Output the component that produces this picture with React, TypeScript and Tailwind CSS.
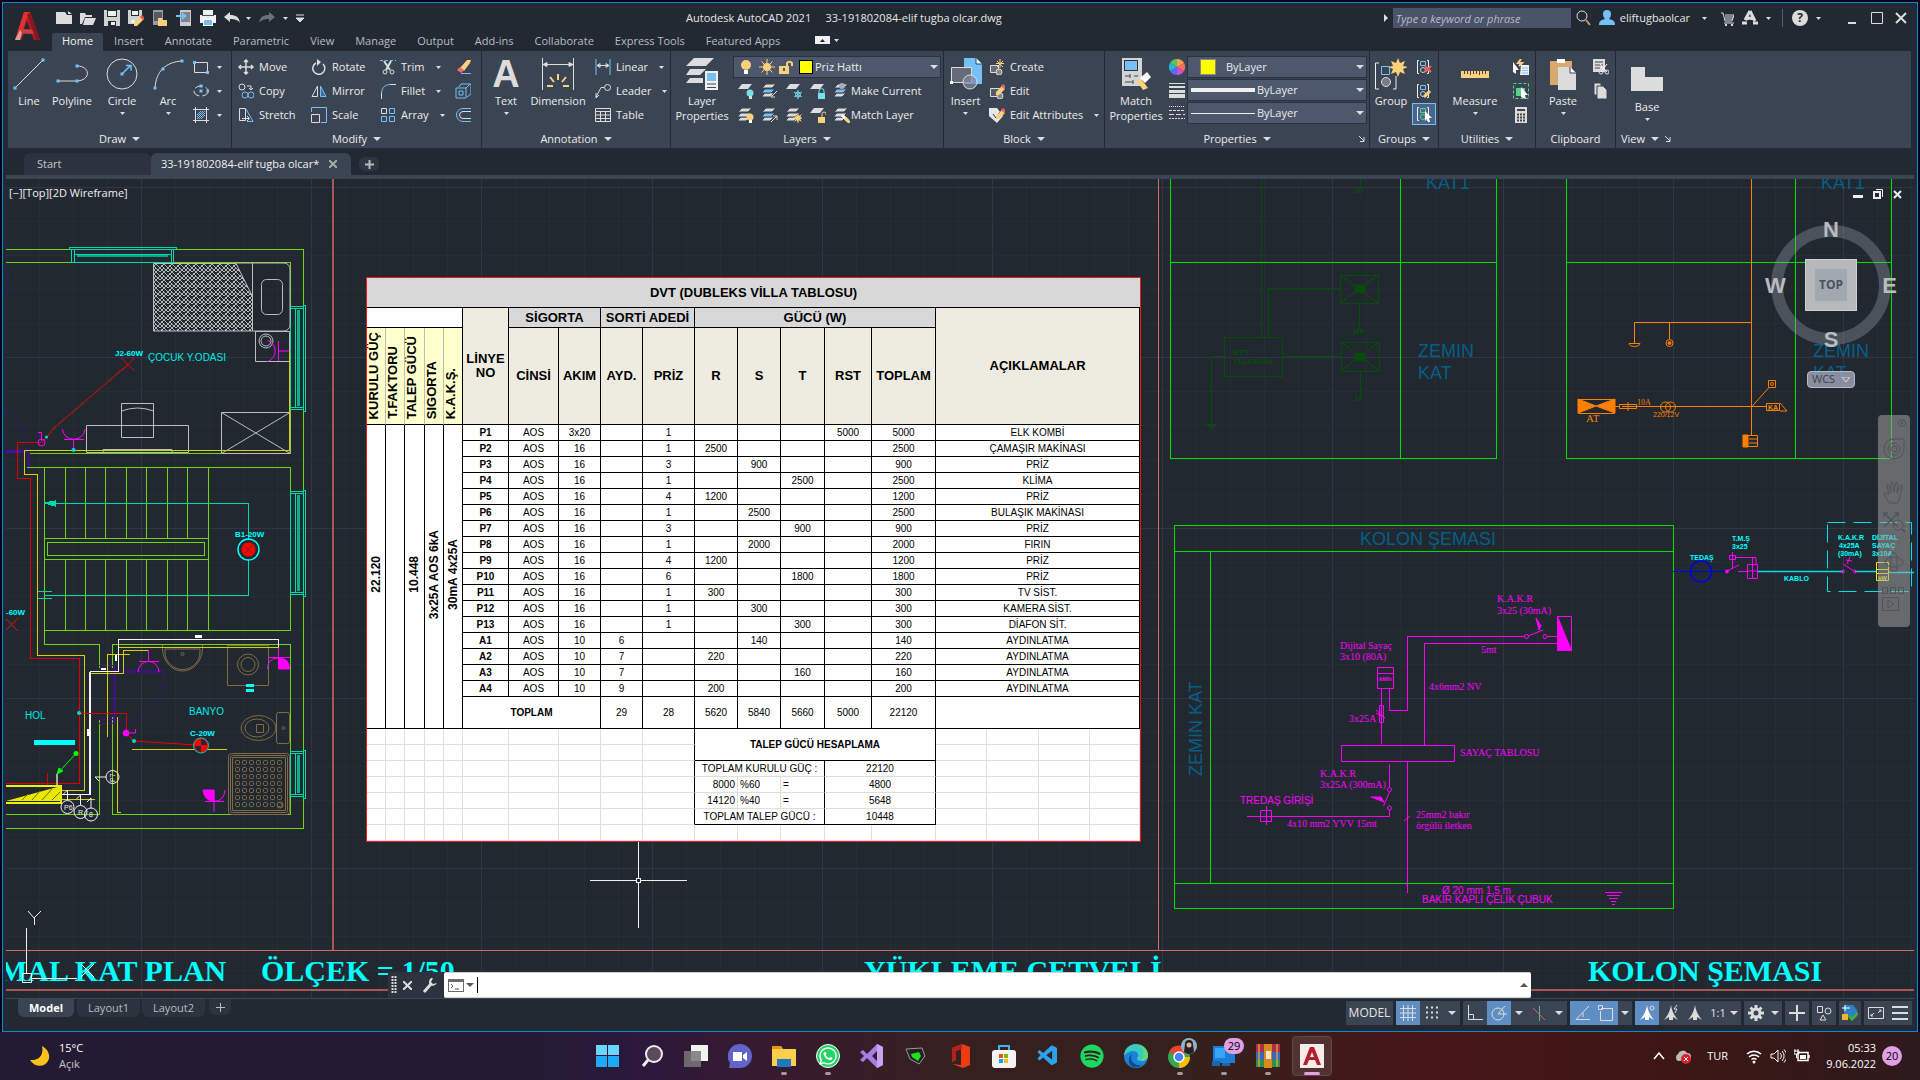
import React from "react";
import { FaSpotify, FaWhatsapp } from "react-icons/fa6";
import { VscVscode } from "react-icons/vsc";

type Kids = { children?: React.ReactNode };

/* ---------- shared pieces ---------- */

function Ico({ s = 16, w, h, vb, children }: Kids & { s?: number; w?: number; h?: number; vb?: string }) {
  return (
    <svg
      width={w ?? s}
      height={h ?? s}
      viewBox={vb ?? `0 0 ${w ?? s} ${h ?? s}`}
      fill="none"
      stroke="#dcdcdc"
      className="block shrink-0"
      aria-hidden="true"
    >
      {children}
    </svg>
  );
}

function Caret({ small }: { small?: boolean }) {
  return small ? (
    <Ico w={5} h={3}><path d="M0 0h5L2.500 3z" fill="#dcdcdc" stroke="none" /></Ico>
  ) : (
    <Ico w={8} h={4}><path d="M0 0h8L4 4z" fill="#dcdcdc" stroke="none" /></Ico>
  );
}

const B = "#74c0f7";
const Y = "#fbd07a";

/* ---------- title bar ---------- */

function Logo() {
  return (
    <svg width="25" height="29" viewBox="0 0 25 29" aria-hidden="true">
      <path d="M9 0h6l10 28h-6l-2-6H9l-3 6H0z" fill="#b3202a" />
      <path d="M9 0h6l3 9-4-1-2-3-4 12-3 11H0z" fill="#e0322f" />
      <path d="M12 9l3 8H9z" fill="#222933" />
      <path d="M5 17l14 1 1 4-13-1z" fill="#c8423f" />
      <path d="M15 0l10 28h-4L12 3z" fill="#8b1620" />
      <path d="M2 24l3-6 2 3-2 7H0z" fill="#d9a09c" />
    </svg>
  );
}

const quick: [string, React.ReactNode][] = [
  ["New", <path key="n" d="M0 2h9l2 3h5v9H0zM12 1l4 3h-4z" fill="#dcdcdc" stroke="none" />],
  ["Open", <path key="o" d="M0 3h5l1 2h6v2H5L2 14H0zM5 8h11l-3 7H3z" fill="#dcdcdc" stroke="none" />],
  ["Save", <g key="s" stroke="none"><path d="M0 0h16v16H0z" fill="#cfd3cf" /><path d="M3 0h10v7H3zM4 11h8v5H4z" fill="#222933" /><path d="M4 1h8v5H4zM7 12h4v3H7z" fill="#eee" /></g>],
  ["Save As", <g key="a" stroke="none"><path d="M0 0h14v9l-6 5H0z" fill="#cfd3cf" /><path d="M3 0h8v6H3z" fill="#222933" /><path d="M4 1h6v4H4zM3 10h4v3H3z" fill="#eee" /><path d="M6 13l7-7 3 3-7 7H6z" fill={Y} /><path d="M12 7l2-2 3 3-2 2z" fill="#e25050" /></g>],
  ["Open from Web", <g key="w" stroke="none"><path d="M1 0h10v15H1z" fill="#9a9da0" /><path d="M2 2h8v9H2z" fill="#555b63" /><path d="M6 8h4l1 2h4v6H6z" fill={Y} /></g>],
  ["Save to Web", <g key="b" stroke="none"><path d="M4 0h11v16H4z" fill="#c9cccf" /><path d="M5 2h9v10H5z" fill="#7d838a" /><path d="M0 5h6V2l5 4-5 4V7H0z" fill={B} /></g>],
  ["Plot", <g key="p" stroke="none"><path d="M3 0h10v5H3zM0 5h16v8H0z" fill="#f0f0f0" /><path d="M3 9h10v7H3z" fill="#fff" /><path d="M4 10h8v5H4z" fill={B} /><path d="M2 5h12v1H2z" fill="#555" /></g>],
  ["Undo", <path key="u" d="M0 7l6-5v3c6 0 9 2 10 8-2-3-5-4-10-4v3z" fill="#dcdcdc" stroke="none" />],
];

const menu = ["Home", "Insert", "Annotate", "Parametric", "View", "Manage", "Output", "Add-ins", "Collaborate", "Express Tools", "Featured Apps"];

function Header() {
  return (
    <header className="flex h-12 text-[#e6e6e6]">
      <div className="flex w-[49px] items-end justify-center pb-[10px]">
        <button aria-label="Application menu"><Logo /></button>
      </div>
      <div className="flex min-w-0 flex-1 flex-col">
        <div className="flex h-[30px] items-center">
          <div className="flex items-center pl-1">
            <div className="flex items-center gap-2">
              {quick.map(([n, i]) => (
                <button key={n} aria-label={n}><Ico>{i}</Ico></button>
              ))}
            </div>
            <span className="ml-[6px]"><Caret small /></span>
            <button aria-label="Redo" className="ml-2">
              <Ico><path d="M16 7l-6-5v3C4 5 1 7 0 13c2-3 5-4 10-4v3z" fill="#6b7077" stroke="none" /></Ico>
            </button>
            <span className="ml-2"><Caret small /></span>
            <button aria-label="Customize" className="ml-2"><Ico w={8} h={8}><path d="M0 1h8M0 4h8L4 8z" fill="#dcdcdc" /></Ico></button>
          </div>
          <h1 className="flex-1 whitespace-pre text-center text-[11px]">{"Autodesk AutoCAD 2021     33-191802084-elif tugba olcar.dwg"}</h1>
          <div className="flex items-center pr-[10px]">
            <Ico w={4} h={8}><path d="M0 0v8l4-4z" fill="#dcdcdc" stroke="none" /></Ico>
            <input
              aria-label="Search"
              placeholder="Type a keyword or phrase"
              className="ml-[5px] h-5 w-[178px] bg-[#4a5367] px-[3px] text-[11px] italic placeholder:text-[#b8bcc6]"
            />
            <button aria-label="Search" className="ml-1"><Ico><circle cx="7" cy="6" r="5" /><path d="M11 10l4 5" stroke="#c79a6a" strokeWidth="2" /></Ico></button>
            <button className="ml-2 flex items-center gap-[5px]">
              <Ico><path d="M8 0a4 4 0 014 4c0 2-1 4-2 5 4 1 6 2 6 6H0c0-4 2-5 6-6-1-1-2-3-2-5a4 4 0 014-4z" fill={B} stroke="none" /></Ico>
              <span>eliftugbaolcar</span>
            </button>
            <span className="ml-3"><Caret small /></span>
            <button aria-label="App Store" className="ml-[14px]"><Ico w={13} h={15}><path d="M0 2h2l2 8h7l2-6M4 4h9M4 6h8M4 8h8M3 12h10" /><path d="M4 13h2v2H4zM10 13h2v2h-2z" fill="#dcdcdc" stroke="none" /></Ico></button>
            <button aria-label="Autodesk" className="ml-2"><Ico><path d="M8 1l5 10M8 1L3 10M4 9l4-1 4 1M0 13h5M11 13h5" strokeWidth="3" /></Ico></button>
            <span className="ml-2"><Caret small /></span>
            <span className="ml-[11px] h-[18px] w-px bg-[#46607c]" />
            <button aria-label="Help" className="ml-[9px] grid size-4 place-items-center rounded-full bg-[#dcdcdc] text-[12px] font-bold leading-4 text-[#222933]">?</button>
            <span className="ml-2"><Caret small /></span>
            <button aria-label="Minimize" className="ml-[27px]"><Ico w={8} h={14}><path d="M0 12h8" strokeWidth="2" /></Ico></button>
            <button aria-label="Maximize" className="ml-[15px]"><Ico w={12} h={12}><path d="M.5.5h11v11H.5z" strokeWidth="1" /></Ico></button>
            <button aria-label="Close" className="ml-3"><Ico w={12} h={12}><path d="M1 1l10 10M11 1L1 11" strokeWidth="2" /></Ico></button>
          </div>
        </div>
        <nav className="flex h-[18px] gap-px text-[#b9bcc2]">
          {menu.map((m, i) => (
            <a key={m} href={"#" + m} className={i === 0 ? "rounded-t-xs bg-[#3b4453] px-[10px] leading-4 text-[#f0f0f0]" : "px-[10px] leading-4"}>{m}</a>
          ))}
          <button aria-label="Ribbon display" className="ml-6 flex items-center gap-1 pb-1">
            <Ico w={15} h={8}><path d="M0 0h15v8H0z" fill="#f0f0f0" stroke="none" /><path d="M5 6l2.500-3L10 6z" fill="#222" stroke="none" /></Ico>
            <Caret small />
          </button>
        </nav>
      </div>
    </header>
  );
}

/* ---------- ribbon ---------- */

function Big({ label, icon, caret, className }: { label: string; icon: React.ReactNode; caret?: boolean; className: string }) {
  return (
    <button className={"flex flex-col items-center self-start pt-[7px] " + className}>
      <span className="grid h-8 place-items-center">{icon}</span>
      <span className="mt-[3px] whitespace-pre-line text-center leading-[15px]">{label}</span>
      {caret && <span className="mt-1"><Caret small /></span>}
    </button>
  );
}

function Row({ label, icon, caret }: { label: string; icon: React.ReactNode; caret?: boolean }) {
  return (
    <button className="flex h-6 items-center gap-[5px] whitespace-nowrap">
      <Ico>{icon}</Ico>
      <span>{label}</span>
      {caret && <span className="ml-[6px]"><Caret small /></span>}
    </button>
  );
}

function Panel({ title, caret = true, launcher, left, className, children }: Kids & { title: string; caret?: boolean; launcher?: boolean; left?: boolean; className: string }) {
  return (
    <section aria-label={title} className={"flex h-[97px] shrink-0 flex-col border-r border-[#222933] bg-[#3b4453] " + className}>
      <div className="flex flex-1">{children}</div>
      <div className={"relative flex h-[18px] items-center gap-[6px] leading-[18px] " + (left ? "pl-[5px]" : "justify-center")}>
        <span>{title}</span>
        {caret && <Caret />}
        {launcher && (
          <span className={left ? "" : "absolute right-1"}>
            <Ico w={6} h={6}><path d="M0 0l5 5M5 1v4.500H1" /></Ico>
          </span>
        )}
      </div>
    </section>
  );
}

function Dot({ x, y }: { x: number; y: number }) {
  return <rect x={x - 1.5} y={y - 1.5} width="3" height="3" fill={B} stroke="none" />;
}

function Sheets({ top, extra }: { top?: string; extra?: React.ReactNode }) {
  return (
    <g>
      <path d="M1 12l2-2h9l-4 4H0z" fill="#dcdcdc" stroke="#3b4453" />
      <path d="M1 8l2-2h10l-4 4H0z" fill={top ?? "#dcdcdc"} stroke="#3b4453" />
      <path d="M4 1h10l-4 4H0z" fill="#dcdcdc" stroke="#3b4453" />
      {extra}
    </g>
  );
}
const bulb = (c: string) => <g stroke="none"><circle cx="12" cy="10" r="3.500" fill={c} /><path d="M11 13h3v3h-3z" fill={c === Y ? "#fff" : "#dcdcdc"} /></g>;
const sun = <g stroke={Y}><circle cx="12" cy="11" r="2.500" fill={Y} /><path d="M12 6v10M7 11h10M8.500 7.500l7 7M15.500 7.500l-7 7" /></g>;
const lock = (c: string, open?: boolean) => <g><path d={open ? "M12 10V7a2 2 0 014 0v1" : "M9 10V8a2 2 0 015 0v2"} stroke={c} /><path d="M8 10h7v6H8z" fill={c} stroke="none" /></g>;
const single = <path d="M4 1h10l-4 5H0z" fill="#dcdcdc" stroke="none" />;
const pencil = <g stroke="none"><path d="M7 9l6-6 3 3-6 6H7z" fill={Y} /><path d="M12 3l2-2 3 3-2 2z" fill="#f06060" /></g>;

function Combo({ label, text, pad, children }: Kids & { label: string; text: string; pad: string }) {
  return (
    <div className="relative h-[22px] w-full border border-[#2a3140] bg-[#4d586c]">
      <div className="pointer-events-none absolute inset-0 flex items-center">{children}</div>
      <select aria-label={label} className={"size-full appearance-none bg-transparent text-[11px] leading-5 " + pad}>
        <option>{text}</option>
      </select>
      <span className="pointer-events-none absolute right-[2px] top-2"><Caret /></span>
    </div>
  );
}

function Ribbon() {
  return (
    <div className="mx-[5px] flex bg-[#3b4453] text-[#ececec]">
      <Panel title="Draw" className="w-[224px]">
        <Big className="w-[42px]" label="Line" icon={<Ico s={32}><path d="M2 30L30 2" /><Dot x={2} y={30} /><Dot x={30} y={2} /></Ico>} />
        <Big className="w-11" label="Polyline" icon={<Ico s={32}><path d="M2 23h18c15 0 15-15 1-15" /><Dot x={2} y={23} /><Dot x={21} y={23} /><Dot x={21} y={8} /></Ico>} />
        <Big className="w-14" label="Circle" caret icon={<Ico s={32}><circle cx="16" cy="16" r="15" /><path d="M16 16l8-8M20 7.500h5v5" stroke={B} strokeWidth="1.500" /><Dot x={16} y={16} /></Ico>} />
        <Big className="w-9" label="Arc" caret icon={<Ico s={32}><path d="M3 30C4 13 14 4 30 3" /><Dot x={3} y={30} /><Dot x={11} y={11} /><Dot x={30} y={3} /></Ico>} />
        <div className="flex flex-col pl-[7px] pt-1">
          {[
            ["Rectangle", <g key="r"><path d="M1.500 3.500h13v10h-13z" /><Dot x={1.500} y={3.500} /><Dot x={14.500} y={13.500} /></g>],
            ["Ellipse", <g key="e"><ellipse cx="8" cy="8" rx="7" ry="5" strokeDasharray="8 3" /><Dot x={8} y={8} /><Dot x={8} y={3} /><Dot x={15} y={8} /></g>],
            ["Hatch", <g key="h"><path d="M2.500 0v16M13.500 0v16M0 2.500h16M0 13.500h16" /><path d="M4 8l4-4M4 12l8-8M8 12l4-4M4 10l6-6M6 12l6-6" stroke={B} /></g>],
          ].map(([n, i]) => (
            <button key={n as string} aria-label={n as string} className="flex h-6 items-center gap-2"><Ico>{i}</Ico><Caret small /></button>
          ))}
        </div>
      </Panel>

      <Panel title="Modify" className="w-[250px]">
        <div className="grid flex-1 grid-cols-[73px_69px_75px_1fr] content-start pl-[6px] pt-1">
          <Row label="Move" icon={<path d="M8 1v14M1 8h14M6 3l2-2 2 2M6 13l2 2 2-2M3 6L1 8l2 2M13 6l2 2-2 2" strokeWidth="1.500" />} />
          <Row label="Rotate" icon={<g><path d="M5 4a6 6 0 107 1" strokeWidth="1.500" /><path d="M6 0l4 3-4 4z" fill="#dcdcdc" stroke="none" /></g>} />
          <Row label="Trim" caret icon={<g><path d="M0 1.500h16" stroke={B} strokeDasharray="3 2" /><path d="M4 2l6 9M11 2L6 11" strokeWidth="2" /><circle cx="5" cy="13" r="2" /><circle cx="12" cy="13" r="2" /></g>} />
          <Row label="" icon={<g stroke="none"><path d="M5 9l7-8h4l-1 3-6 8z" fill={Y} /><path d="M2 11l3-3 4 3-3 3z" fill="#f06a6a" /><path d="M6 14h10v1H6z" fill={B} /></g>} />
          <Row label="Copy" icon={<g><circle cx="4" cy="4" r="3" /><path d="M9 3h4v4M11 5l2 2 2-2" /><circle cx="7" cy="12" r="3" stroke={B} /><circle cx="13" cy="12" r="3" stroke={B} /></g>} />
          <Row label="Mirror" icon={<g><path d="M6.500 3v10.500H1z" /><path d="M9.500 3v10.500H15z" stroke={B} fill="#3f6e9a" /></g>} />
          <Row label="Fillet" caret icon={<g><path d="M1.500 16v-6" /><path d="M1.500 10C2 4 5 2 10 1.500" stroke={B} /><path d="M10 1.500h6" /></g>} />
          <Row label="" icon={<path d="M1 5h10v10H1zM4 4l2-3h10v10l-4 3M11 5l4-4M4 8h4v4H4z" stroke={B} />} />
          <Row label="Stretch" icon={<g><path d="M1.500 1.500h6v12h-6zM4 11.500h7M9 9l2.500 2.500L9 14" /><path d="M8 2l7 12.500H9" stroke={B} /></g>} />
          <Row label="Scale" icon={<g><path d="M.5 7.500h8v8h-8z" /><path d="M.5 5V.5h15v15H10" stroke={B} /></g>} />
          <Row label="Array" caret icon={<g><path d="M1.500 1.500h5v5h-5z" /><path d="M9.500 1.500h5v5h-5zM1.500 9.500h5v5h-5zM9.500 9.500h5v5h-5z" stroke={B} /></g>} />
          <Row label="" icon={<g><path d="M16 1.500H8a6.500 6.500 0 000 13h8" stroke={B} /><path d="M16 4.500H8a3.500 3.500 0 000 7h8" /></g>} />
        </div>
      </Panel>

      <Panel title="Annotation" className="w-[189px]">
        <Big className="w-12" label="Text" caret icon={<span className="font-['Liberation_Sans',sans-serif] text-[38px] font-bold leading-8 text-[#dcdcdc]">A</span>} />
        <Big className="w-14" label="Dimension" icon={<Ico s={32}><path d="M.5 0v32M31.500 0v32M1 6.500h30M1 6.500l4-2v4zM31 6.500l-4-2v4z" fill="#dcdcdc" /><path d="M16 16v6M8 19l4 5M24 19l-4 5M5 28h6M21 28h6" stroke={Y} strokeWidth="2" /></Ico>} />
        <div className="flex flex-col items-start pl-[9px] pt-1">
          <Row label="Linear" caret icon={<g><path d="M1 0v16M15 0v16" stroke={B} /><path d="M2 6.500h12M2 6.500l3-2v4zM14 6.500l-3-2v4z" /></g>} />
          <Row label="Leader" caret icon={<g><circle cx="12.500" cy="4.500" r="3" /><path d="M9 4.500H6L1 14M1 10v5l3-3" /></g>} />
          <Row label="Table" icon={<path d="M.5 1.500h15v13H.5zM.5 4.500h15M.5 8h15M.5 11.500h15M5.500 4v10M10.500 4v10" />} />
        </div>
      </Panel>

      <Panel title="Layers" className="w-[273px]">
        <Big className="w-[62px]" label={"Layer\nProperties"} icon={
          <Ico s={32}><g stroke="none"><path d="M8 0h20l-8 8H0zM4 11h16l-6 6H0zM4 20h13v5H0z" fill="#dcdcdc" /><path d="M19 13h13v19H19z" fill="#f0f0f0" /><path d="M21 15h9v8h-9z" fill={B} /></g><path d="M21 26h9M21 29.500h9" stroke="#444" /></Ico>} />
        <div className="flex flex-1 flex-col pr-[2px] pt-[5px]">
          <Combo label="Layer" text="Priz Hattı" pad="pl-[81px]">
            <div className="flex items-center gap-1 pl-[5px]">
              <Ico><circle cx="7" cy="6" r="5" fill={Y} stroke="none" /><path d="M5 11h4v4H5z" fill="#fff" stroke="none" /></Ico>
              <Ico><circle cx="8" cy="8" r="4" fill={Y} stroke="none" /><path d="M8 0v16M0 8h16M2.500 2.500l11 11M13.500 2.500l-11 11" stroke={Y} /></Ico>
              <Ico><path d="M0 7h10v8H0z" fill={Y} stroke="none" /><path d="M8 8V4a3 3 0 015 0v3" stroke={Y} strokeWidth="2" /><path d="M4 9h2v3H4z" fill="#4d586c" stroke="none" /></Ico>
              <span className="size-[14px] border border-black bg-[#ffff00]" />
            </div>
          </Combo>
          {[0, 1].map((r) => (
            <div key={r} className="flex h-6 items-center gap-2 pl-[5px] pt-[2px]">
              {(r === 0
                ? [
                    <g key="1">{single}{bulb("#74e0ec")}</g>,
                    <Sheets key="2" top={B} extra={<path d="M15 8l-5 5M9 10v4h4" />} />,
                    <g key="3">{single}<path d="M12 7v9M8 9l8 5M16 9l-8 5" stroke="#74e0ec" /><circle cx="12" cy="11.500" r="2.500" stroke="#74e0ec" /></g>,
                    <g key="4">{single}{lock("#74e0ec")}</g>,
                    <g key="5"><Sheets top={B} /><circle cx="8" cy="3" r="3" fill="#aab" stroke="none" /></g>,
                  ]
                : [
                    <Sheets key="1" extra={bulb(Y)} />,
                    <Sheets key="2" top={B} extra={<path d="M9 15l6-6M11 9h4v4" />} />,
                    <Sheets key="3" extra={sun} />,
                    <g key="4">{single}{lock(Y, true)}</g>,
                    <Sheets key="5" extra={<g><path d="M8 8l6 6" stroke="#fff" strokeWidth="3" /><path d="M11 11l5 5" stroke={Y} strokeWidth="3" /></g>} />,
                  ]
              ).map((ic, i) => (
                <button key={i} aria-label={"Layer tool " + (r * 5 + i + 1)}><Ico>{ic}</Ico></button>
              ))}
              <button className="-ml-2 whitespace-nowrap pl-px">{r === 0 ? "Make Current" : "Match Layer"}</button>
            </div>
          ))}
        </div>
      </Panel>

      <Panel title="Block" className="w-[161px]">
        <Big className="w-[43px]" label="Insert" caret icon={
          <Ico s={32}><path d="M14 0h12l6 6v20H14z" fill={B} stroke="none" /><path d="M26 0v6h6" fill="#dff" stroke="#3b4453" /><path d="M1.500 9.500h20v15h-20z" fill="#666c78" /><circle cx="20" cy="24" r="7" fill="#8088a0" fillOpacity=".7" /><rect x="0" y="23" width="3" height="3" fill="#fff" stroke="none" /></Ico>} />
        <div className="flex flex-col items-start pl-[2px] pt-1">
          <Row label="Create" icon={<g><path d="M1.500 6.500h8v7h-8z" fill="#666c78" /><circle cx="10" cy="13" r="3" fill="#888" /><path d="M11 0v9M7 4.500h8M8 2l6 6M14 2L8 8" stroke={Y} /></g>} />
          <Row label="Edit" icon={<g><path d="M1.500 5.500h9v8h-9z" fill="#555b66" /><circle cx="11" cy="13" r="3" fill="#888" />{pencil}</g>} />
          <Row label="Edit Attributes" caret icon={<g><path d="M0 1h8l6 8-6 7-8-7z" fill="#e6e6e6" stroke="none" /><path d="M4 7l3 4 4-6" stroke="#333" />{pencil}</g>} />
        </div>
      </Panel>

      <Panel title="Properties" launcher className="w-[265px]">
        <Big className="w-[62px]" label={"Match\nProperties"} icon={
          <Ico s={32}><g stroke="none"><path d="M2 0h20v28H2z" fill="#d4d4d4" /><path d="M4 2h14v11H4z" fill="#333" /><path d="M5 3h12v9H5z" fill={B} /><path d="M20 20l7-6 4 5-6 6z" fill="#fff" /><path d="M16 22l6 0 6 8-5 2z" fill={Y} /></g><path d="M5 18h5M14 18h4M5 24h8M10 16v4M13 22v4" stroke="#444" /></Ico>} />
        <div className="flex flex-1 flex-col gap-px pl-[2px] pr-[2px] pt-[5px]">
          <div className="flex items-center gap-[2px]">
            <Ico><g stroke="none"><path d="M8 8V0a8 8 0 017 4z" fill="#ff9f43" /><path d="M8 8l7-4a8 8 0 010 8z" fill="#ff6b57" /><path d="M8 8l7 4a8 8 0 01-7 4z" fill="#d14fd1" /><path d="M8 8v8a8 8 0 01-7-4z" fill="#5b6bf0" /><path d="M8 8l-7 4a8 8 0 010-8z" fill="#29b6d8" /><path d="M8 8L1 4a8 8 0 017-4z" fill="#59c16b" /></g></Ico>
            <Combo label="Object color" text="ByLayer" pad="pl-[38px]"><span className="ml-3 size-4 border border-[#888] bg-[#ffff00]" /></Combo>
          </div>
          <div className="flex items-center gap-[2px]">
            <Ico><path d="M0 1.500h16" /><path d="M0 5h16" strokeWidth="2" /><path d="M0 9.500h16" strokeWidth="3" /><path d="M0 14h16" strokeWidth="4" /></Ico>
            <Combo label="Lineweight" text="ByLayer" pad="pl-[69px]"><span className="ml-[3px] h-1 w-16 bg-[#f0f0f0]" /></Combo>
          </div>
          <div className="flex items-center gap-[2px]">
            <Ico><path d="M0 1.500h16" strokeDasharray="1 1" /><path d="M0 5.500h16" strokeDasharray="3 1" /><path d="M0 9.500h16" strokeDasharray="5 2" /><path d="M0 13.500h16" strokeDasharray="2 1" /></Ico>
            <Combo label="Linetype" text="ByLayer" pad="pl-[69px]"><span className="ml-[3px] h-px w-16 bg-[#f0f0f0]" /></Combo>
          </div>
        </div>
      </Panel>

      <Panel title="Groups" className="w-[69px]">
        <Big className="w-[42px]" label="Group" icon={
          <Ico s={32}><path d="M4 5H.5v26H4M18 31h3V18" stroke="#eee" /><path d="M6.500 8.500h8v8h-8z" stroke={B} /><circle cx="11" cy="24" r="4.500" fill="#777c86" /><path d="M23 0l2 5 5-2-2 5 5 1-5 2 2 5-5-2-2 5-2-5-5 2 2-5-5-2 5-1-2-5 5 2z" fill={Y} stroke="none" /></Ico>} />
        <div className="flex flex-col pt-1">
          {[
            <path key="a" d="M9 7l6 6M15 7l-6 6" stroke="#f06060" strokeWidth="2" />,
            <path key="b" d="M8 14l6-6" stroke={Y} strokeWidth="3" />,
            <path key="c" d="M9 5l7 7h-3l1 4-2 0-1-3-2 2z" fill="#fff" stroke="none" />,
          ].map((x, i) => (
            <button key={i} aria-label={["Ungroup", "Group Edit", "Group Selection"][i]} className={"grid w-6 place-items-center " + (i === 2 ? "h-[22px] border border-[#74c0f7] bg-[#4a6588]" : "h-6")}>
              <Ico><path d="M3 1.500H1.500v13H3M11 1.500h1.500v13H11" stroke="#eee" /><path d="M4.500 2.500h5v4h-5z" stroke={i === 2 ? "#59d18b" : B} /><circle cx="7" cy="11" r="2.500" stroke={i === 2 ? "#59d18b" : "#ccc"} />{x}</Ico>
            </button>
          ))}
        </div>
      </Panel>

      <Panel title="Utilities" className="w-[97px]">
        <Big className="w-[72px]" label="Measure" caret icon={<Ico w={28} h={7}><path d="M0 0h28v7H0z" fill={Y} stroke="none" /><path d="M3.500 0v3M6.500 0v3M9.500 0v4M12.500 0v3M15.500 0v3M18.500 0v4M21.500 0v3M24.500 0v3" stroke="#3b4453" /></Ico>} />
        <div className="flex flex-col pl-[2px] pt-1 [&>button]:h-6">
          <button aria-label="Quick Select"><Ico><path d="M8 6h8v10H7z" fill="#f0f0f0" stroke="none" /><path d="M9 9h6M9 11.500h6M9 14h6" stroke={B} /><path d="M0 3l6 8H3v4L0 13z" fill="#fff" stroke="none" /><path d="M8 0l-3 4h4L6 7" stroke={Y} strokeWidth="2" /></Ico></button>
          <button aria-label="Select All"><Ico><path d="M.5.5h15v15H.5z" stroke="#59d18b" strokeDasharray="3 2" /><path d="M3 5h9v8H3z" fill="#59d18b" stroke="none" /><path d="M8 4l7 8h-3l1 4-3-1-2-1z" fill="#fff" stroke="none" /></Ico></button>
          <button aria-label="Quick Calculator"><Ico><path d="M2 0h12v16H2z" fill="#dcdcdc" stroke="none" /><path d="M4 3h8M4 7.500h2M7 7.500h2M10 7.500h2M4 10.500h2M7 10.500h2M10 10.500h2M4 13.500h2M7 13.500h2M10 13.500h2" stroke="#444" strokeWidth="2" /></Ico></button>
        </div>
      </Panel>

      <Panel title="Clipboard" caret={false} className="w-20">
        <Big className="w-[54px]" label="Paste" caret icon={<Ico w={28} h={32}><g stroke="none"><path d="M1 3h22v24H1z" fill="#d9a86c" /><path d="M8 1h8v4H8z" fill="#fff" /><path d="M9 9h12l6 6v17H9z" fill="#dcdcdc" /><path d="M21 9v6h6z" fill="#fff" /></g><path d="M21 9v6h6" stroke="#3b4453" /></Ico>} />
        <div className="flex flex-col pl-[3px] pt-1 [&>button]:h-6">
          <button aria-label="Cut"><Ico><path d="M0 0h12v13H0z" fill="#dcdcdc" stroke="none" /><path d="M2 3h8M2 6h8M2 9h5" stroke="#444" /><path d="M7 5l7 8M14 5l-6 8" stroke="#fff" /><circle cx="8" cy="13" r="2" /><circle cx="14" cy="13" r="2" /></Ico></button>
          <button aria-label="Copy Clip"><Ico><path d="M1 0h7v12H1z" fill="#dcdcdc" stroke="#3b4453" /><path d="M4 3h6l4 4v9H4z" fill="#dcdcdc" stroke="#3b4453" /></Ico></button>
        </div>
      </Panel>

      <Panel title="View" launcher left className="min-w-0 flex-1">
        <button className="flex w-[62px] flex-col items-center self-start pt-4">
          <Ico w={32} h={24}><path d="M0 0h14v10h18v14H0z" fill="#dcdcdc" stroke="none" /></Ico>
          <span className="mt-2 leading-[15px]">Base</span>
          <span className="mt-1"><Caret small /></span>
        </button>
      </Panel>
    </div>
  );
}

function DocTabs() {
  return (
    <div>
      <div className="flex h-[27px] items-end pl-[21px]">
        <a href="#start" className="h-[22px] w-[127px] rounded-t-md bg-[#2c333f] pl-[13px] leading-[22px] text-[#c4c7cc]">Start</a>
        <div className="flex h-[22px] w-[200px] items-center rounded-t-md bg-[#3b4453] pl-[10px] text-[#f0f0f0]">
          <a href="#drawing" className="whitespace-nowrap">33-191802084-elif tugba olcar*</a>
          <button aria-label="Close tab" className="ml-[10px]"><Ico w={8} h={8}><path d="M0 0l8 8M8 0L0 8" strokeWidth="2" stroke="#aaa" /></Ico></button>
        </div>
        <button aria-label="New tab" className="mb-1 ml-2 grid h-[14px] w-5 place-items-center rounded-md bg-[#2f3643]"><Ico w={9} h={9}><path d="M4.500 0v9M0 4.500h9" stroke="#bbb" strokeWidth="2" /></Ico></button>
      </div>
      <div className="mx-[3px] h-1 bg-[#3b4453]" />
    </div>
  );
}

/* ---------- CAD drawing (drawn in window coordinates) ---------- */

function Txt({ x, y, s = 10, f = "#ff00ff", b, serif, v, children }: Kids & { x: number; y: number; s?: number; f?: string; b?: boolean; serif?: boolean; v?: boolean }) {
  return (
    <text
      x={x}
      y={y}
      fontSize={s}
      fill={f}
      stroke="none"
      fontWeight={b ? 700 : 400}
      fontFamily={serif ? "'Liberation Serif', serif" : "'Liberation Sans', sans-serif"}
      transform={v ? `rotate(-90 ${x} ${y})` : undefined}
    >
      {children}
    </text>
  );
}

function Grid() {
  const xs = Array.from({ length: 58 }, (_, i) => i - 4);
  const ys = Array.from({ length: 26 }, (_, i) => i);
  return (
    <g shapeRendering="crispEdges">
      {xs.map((i) => <path key={i} d={`M${Math.round(141 + i * 34.04)}.500 179v1400`} stroke={i % 5 === 0 ? "#2f3645" : "#262d37"} />)}
      {ys.map((i) => <path key={i} d={`M0 ${Math.round(187 + i * 34.06)}.500h4000`} stroke={i % 5 === 0 ? "#2f3645" : "#262d37"} />)}
    </g>
  );
}

function FloorPlan() {
  const stairs = [65, 85, 105, 126, 146, 167, 187];
  return (
    <g fill="none">
      <g shapeRendering="crispEdges">
        <path stroke="#6fd60c" d={"M6 249.500H303.500V828.500H6M6 262.500H290V453.500H30M27 467.500H290V630.500H44.500M44.500 467V644.500H99.500V668M99.500 720V814.500H6M112.500 668V644.500H290V814.500H112.500V717M44 538.500H208.500V559.500H44M47.500 542.500H204.500V555.500H47.500zM208.500 467V538M208.500 560V630" + stairs.map((x) => `M${x}.500 467V538M${x}.500 560V630`).join("")} />
        <g stroke="#00dca8">
          <path d="M69 247.500h107v2H69zM71.500 249v13h102v-13M74.500 249v13M171.500 249v13M74 254.500h98" />
          <path d="M77 255h91" strokeWidth="3" strokeOpacity=".7" />
          {[[305, 411], [490, 596], [750, 798]].map(([a, b]) => (
            <g key={a}>
              <path d={`M303.500 ${a}h2V${b}h-2zM290 ${a + 1.5}h14M290 ${a + 3.5}h14M290 ${b - 3.5}h14M290 ${b - 1.5}h14M290.500 ${a + 2}V${b - 2}M295.500 ${a + 4}V${b - 4}`} />
              <path d={`M298 ${a + 5}V${b - 5}`} strokeWidth="3" strokeOpacity=".75" />
            </g>
          ))}
          <path d="M44 503.500H248.500V540M248.500 560V595.500H44M37 591.500h15M37 598.500h15" />
          <path d="M44 503l11-2v5z" fill="#00dca8" />
        </g>
      </g>
      {/* bed, desk and wardrobe */}
      <g stroke="#bdbdbd">
        <path d="M153.500 263.500H236l16.500 33v34.500h-99z" fill="url(#weave)" />
        <path d="M236 263h48a6 6 0 016 6v56a6 6 0 01-6 6h-31.500V263" />
        <rect x="261.500" y="279.500" width="21" height="35" rx="5" />
        <path d="M255.500 331.500h34v30h-34zM86.500 425.500h102v27h-102zM121.500 403.500h32v34h-32zM121.500 411q16-6 32 0M221.500 412.500h68.500v41h-68.500zM221.500 412.500l68.500 41M290 412.500l-68.500 41" />
        <path d="M103 449.500h69v3h-69z" />
        <circle cx="266" cy="341" r="7" /><circle cx="266" cy="341" r="5" />
      </g>
      {/* bathroom fittings */}
      <g stroke="#806b45">
        <path d="M162.500 645v3a20 23 0 0040 0v-3M165 649h35v3a17 17 0 01-35 0z" />
        <circle cx="182.500" cy="654" r="1.500" />
        <path d="M227.500 645.500h41v40h-41z" /><circle cx="248" cy="664.500" r="10.500" /><circle cx="248" cy="664.500" r="7" />
        <ellipse cx="258.500" cy="728" rx="17.500" ry="12.500" /><ellipse cx="257" cy="728" rx="12" ry="9" />
        <path d="M256.500 724.500h7v8h-7z" /><rect x="276.500" y="712.500" width="13" height="31" rx="2" /><circle cx="283.500" cy="728" r="1.500" />
        <rect x="228.500" y="753.500" width="61" height="61" rx="3" /><path d="M232.500 757.500h53v53h-53z" /><rect x="230.500" y="755.500" width="57" height="57" rx="2" />
        {Array.from({ length: 49 }, (_, i) => (
          <rect key={i} x={235.500 + (i % 7) * 7} y={760.500 + Math.floor(i / 7) * 7} width="4" height="4" rx="1" />
        ))}
        <circle cx="280" cy="805" r="3" />
      </g>
      {/* doors */}
      <g stroke="#4b0aa0">
        <path d="M6 409q19 14 21 43" strokeDasharray="2 1" /><path d="M6 451.500h21" strokeWidth="3" /><path d="M28.500 452v15" strokeWidth="2" />
        <path d="M8 271q1 12-2 23" strokeDasharray="3 2" />
        <path d="M114.500 666v58" strokeWidth="2" /><path d="M99 665.500h16M99 719.500h16M99 723.500h16" />
        <path d="M119 671.500h45" strokeWidth="4" strokeDasharray="1 1" /><path d="M164.500 674q-1 44-44 48" strokeDasharray="2 2" />
        <path d="M6 773q8 10 8 28" strokeDasharray="2 2" />
      </g>
      <g shapeRendering="crispEdges">
        <path stroke="#d8d000" d="M289 351V450.500H24.500V474.500H37V655H84.500V790.500H61M107.500 737V654.500H130M149 650.500H123V673.500H90M118 647.500H279M117.500 717V812.500h3M132 749.500h95M61 799.500h34" />
        <path stroke="#f4f4f4" d="M278.500 647V639.500H118.500V671.500H90.500V794.500H61M89 672V794" />
        <path fill="#fff" d="M195 635h7v3h-7zM115 655h2v6h-2zM101 668h5v2h-5zM87 729h3v7h-3z" />
        <path stroke="#e00000" d="M41 442.500H17.500V478.500H30.500V658.500H79V783.500H6M47 773v12M79 713.500H126V733" />
        <path fill="#00ffff" d="M246 684h8v3h-8zM246 689h8v3h-8zM34 740h41v5H34z" />
        <path stroke="#f0f000" d="M6 785.500H61V802.500H6" strokeWidth="2" />
      </g>
      <path fill="#e8e800" d="M6 801L61 786v15z" />
      <path stroke="#6d6d10" d="M22 800l6-6M32 800l8-9M42 800l10-11M52 800l8-8" />
      <g stroke="#f00000">
        <path d="M121.500 358l13 13M134.500 358l-13 13M128 364.500L54 428l-12 15M5 618l13 13M18 618L5 631M126 733l8 8 62 4" />
      </g>
      <g stroke="#ff00ff">
        <path d="M267.500 340.500a11 11 0 010 21M278.500 341v20M278.500 351h11M62.500 429a11 10 0 0022.500 0M64 439.500h20M73.500 439v11M41.500 441v-8.500H38" />
        <circle cx="41.500" cy="442.500" r="3.500" /><circle cx="126" cy="733" r="3" fill="#ff00ff" />
        <path d="M148.500 650v11M139 661.500h20M138 672a10.500 10.500 0 0121 0M278.500 648v9M268 657.500h22M267.500 669q0-11 11-11M126 733h9.500v-4M205 801.500h19M214 790v22M225 790q-1 11-11 11.500" />
        <path fill="#ff00ff" d="M278.500 658q11 0 11 11h-11zM203 790h11v11.500q-10-1-11-11.500z" />
      </g>
      <circle cx="248.500" cy="549.500" r="10.500" stroke="#00ffff" strokeWidth="1.500" /><circle cx="248.500" cy="549.500" r="7" fill="#ff0000" />
      <path d="M245 546l7 7M252 546l-7 7" stroke="#7a1010" />
      <circle cx="201" cy="745.500" r="7.500" stroke="#00c8c8" fill="#ff0000" /><path d="M201 745h6a6 6 0 00-6-6zM201 746h-6a6 6 0 006 6z" fill="#222933" />
      <g fill="#00d8e0"><circle cx="73.500" cy="450" r="2" /><circle cx="46.500" cy="437" r="1.500" /><circle cx="79" cy="713" r="2" /><circle cx="134" cy="741" r="2" /></g>
      <path d="M57 774v11" stroke="#aaa" strokeWidth="2" />
      <path d="M76 753.500L57 774" stroke="#00ff00" /><circle cx="76" cy="753.500" r="2.500" fill="#00ff00" /><path d="M57 774l2-6 4 3z" fill="#00ff00" stroke="#00ff00" />
      <g stroke="#f0f0f0">
        <circle cx="67.500" cy="807" r="6.500" /><circle cx="80.500" cy="812" r="6.500" /><circle cx="91" cy="814.500" r="6.500" /><circle cx="112.500" cy="777" r="6.500" />
        <path d="M67.500 800v-10l-4 4M80.500 805v-10l-4 4M91 808v-10l-4 4M106 777H95l4 4" />
      </g>
      <Txt x={64} y={810} s={7} f="#eee">P6</Txt><Txt x={78} y={815} s={7} f="#eee">R</Txt><Txt x={89} y={817} s={7} f="#eee">8</Txt><Txt x={115} y={782} s={7} f="#eee" v>P7</Txt>
      <Txt x={148} y={361} f="#00e8e8">ÇOCUK Y.ODASI</Txt>
      <Txt x={189} y={715} f="#00e8e8">BANYO</Txt>
      <Txt x={25} y={719} f="#00e8e8">HOL</Txt>
      <Txt x={115} y={356} s={8} b f="#00ffff">J2-60W</Txt>
      <Txt x={235} y={537} s={8} b f="#00ffff">B1-20W</Txt>
      <Txt x={190} y={736} s={8} b f="#00ffff">C-20W</Txt>
      <Txt x={6} y={615} s={8} b f="#00ffff">-60W</Txt>
    </g>
  );
}

function RiserDiagrams() {
  return (
    <g fill="none">
      <g stroke="#064e08" shapeRendering="crispEdges">
        <path d="M1261.500 179V337M1224 337.500h58v39h-58zM1268.500 337V288.500H1340M1340.500 275.500h38v28h-38zM1340 275l38 28M1378 275l-38 28M1359.500 304v26M1341.500 342.500h38v29h-38zM1341 342l38 29M1379 342l-38 29M1360.500 371v28M1282 356.500h59M1224 356.500H1211.500V424M1206 424.500h11M1208 426.500h7M1210 428.500h3M1360.500 179v10" />
        <path d="M1355 285h9v7h-9zM1355 353h9v7h-9z" fill="#064e08" />
      </g>
      <Txt x={1233} y={355} s={8} f="#064e08" b>BTT</Txt><Txt x={1233} y={364} s={8} f="#064e08" b>TELEKOM</Txt>
      <Txt x={1353} y={334} s={8} f="#064e08" b>MP</Txt><Txt x={1354} y={401} s={8} f="#064e08" b>1#</Txt><Txt x={1354} y={193} s={8} f="#064e08" b>20</Txt>
      <g stroke="#00e000" shapeRendering="crispEdges">
        <path d="M1170.500 179V458.500H1496.500V179M1400.500 179V458M1170 262.500H1496M1566.500 179V458.500H1891.500V179M1795.500 179V458M1566 262.500H1891" />
        <path d="M1174.500 525.500H1673.500V908H1174.500zM1174 551.500H1673M1174 883.500H1673M1210.500 551V883" />
      </g>
      {[1426, 1821].map((x) => (
        <g key={x}>
          <Txt x={x} y={189} s={18} f="#045f86">KAT1</Txt>
          <Txt x={x - 8} y={357} s={18} f="#045f86">ZEMIN</Txt>
          <Txt x={x - 8} y={379} s={18} f="#045f86">KAT</Txt>
        </g>
      ))}
      <g stroke="#ff8000">
        <path d="M1751.500 179V436M1751.500 322.500H1634.500V343M1669.500 322V339M1615 406.500h5M1637 406.500H1766M1751.500 407l17-19M1622 406.500h14M1628 402v9" />
        <path d="M1629 343.500h11a5.500 3 0 01-11 0zM1578.500 399.500h36v14h-36zM1619.500 404.500h17v4h-17zM1768.500 380.500h7v7h-7zM1766.500 403.500h13v7h-13zM1780 403l7 8h-7M1743.500 435.500h14v11h-14zM1749 439h8M1749 443h8" />
        <path d="M1578 399l18 7-18 7zM1615 399l-19 7 19 7zM1743 435h5v12h-5z" fill="#ff8000" />
        <circle cx="1669.500" cy="343" r="3.500" /><circle cx="1669.500" cy="343" r="1.500" fill="#ff8000" /><circle cx="1772" cy="384" r="1.500" />
        <circle cx="1665.500" cy="407" r="5" /><circle cx="1670.500" cy="407" r="5" />
      </g>
      <Txt x={1586} y={422} s={11} serif f="#ff8000">AT</Txt><Txt x={1637} y={405} s={8} serif f="#ff8000">10A</Txt>
      <Txt x={1653} y={417} s={7} f="#ff8000">220/12V</Txt><Txt x={1768} y={410} s={7} b f="#ff8000">KA</Txt>

      {/* single-line schematic */}
      <g stroke="#ff00ff">
        <path d="M1524 636.500H1407.500V710.500H1389.500V688M1381.500 688V744M1424.500 745V643.500H1557M1547 636.500h10" />
        <path d="M1377.500 667.500h16v21h-16zM1377.500 673.500h16M1379.500 705.500h4v17h-4zM1376 710l9 8M1376 713l9 5M1341.500 745.500h113v16h-113zM1557.500 616.500h14v34h-14z" />
        <path d="M1557.500 616.500l14 34h-14zM1539 630l-3-12 5 8zM1384 802l-13-5 10 0z" fill="#ff00ff" />
        <circle cx="1526.500" cy="636.500" r="2" /><circle cx="1545" cy="636.500" r="2" /><circle cx="1389.500" cy="789.500" r="2" /><circle cx="1389.500" cy="808" r="2" />
        <path d="M1528 636l15-6M1407.500 762V893M1404 821l6-5M1389.500 764V787M1389.500 792l-6 14M1389.500 810V816.500H1247M1260.500 810.500h11v11h-11zM1266.500 806v19" />
        <path d="M1605 892.500h17M1607 895.500h13M1609 898.500h9M1611 901.500h5M1612 904.500h3" />
      </g>
      <Txt x={1360} y={545} s={18} f="#045f86">KOLON ŞEMASI</Txt><Txt x={1202} y={776} s={18} f="#045f86" v>ZEMIN KAT</Txt>
      <Txt x={1497} y={602} serif>K.A.K.R</Txt><Txt x={1497} y={614} serif>3x25 (30mA)</Txt>
      <Txt x={1340} y={649} serif>Dijital Sayaç</Txt><Txt x={1340} y={660} serif>3x10 (80A)</Txt>
      <Txt x={1481} y={653} serif>5mt</Txt><Txt x={1429} y={690} serif>4x6mm2 NV</Txt><Txt x={1349} y={722} serif>3x25A</Txt>
      <Txt x={1460} y={756} serif>SAYAÇ TABLOSU</Txt><Txt x={1320} y={777} serif>K.A.K.R</Txt><Txt x={1320} y={788} serif>3x25A (300mA)</Txt>
      <Txt x={1240} y={804}>TREDAŞ GİRİŞİ</Txt><Txt x={1287} y={827} serif>4x10 mm2 YVV 15mt</Txt>
      <Txt x={1416} y={818} serif>25mm2 bakır</Txt><Txt x={1416} y={829} serif>örgülü iletken</Txt>
      <Txt x={1442} y={894}>Ø 20 mm 1,5 m</Txt><Txt x={1422} y={903}>BAKIR KAPLI ÇELİK ÇUBUK</Txt>
      <Txt x={1379} y={681} s={6} b>kWh</Txt>

      {/* supply line */}
      <path d="M1673 571.500H1727" stroke="#0000e8" /><circle cx="1701" cy="571.500" r="10.500" stroke="#0000e8" strokeWidth="1.500" />
      <path d="M1758 571.500H1843M1855 571.500h21M1889 572.500h25" stroke="#00e0e8" strokeWidth="1.500" />
      <path d="M1827.500 522.500H1911.500V591.500H1827.500z" stroke="#00e0e8" strokeDasharray="18 8" />
      <g stroke="#ff00ff">
        <circle cx="1727" cy="571.500" r="1.500" fill="#ff00ff" /><circle cx="1843" cy="571.500" r="1.500" /><circle cx="1855" cy="571.500" r="1.500" />
        <path d="M1727 571l12-6M1738 571.500h10M1729.500 555.500h6v4h-6zM1732.500 552v17M1736 557.500h20v7M1747.500 564.500h10v14h-10zM1752.500 557v21M1748 571h10M1854 571l-11-7M1847 564l3-7M1846 560l6 1" />
      </g>
      <path d="M1876.500 562.500h12v18h-12zM1876 569.500h12M1876 573.500h12" stroke="#f0f000" /><Txt x={1878} y={580} s={6} f="#f0f000" b>kW</Txt>
      <Txt x={1690} y={560} s={7} b f="#00ffff">TEDAŞ</Txt><Txt x={1732} y={541} s={7} b f="#00ffff">T.M.Ş</Txt><Txt x={1732} y={549} s={7} b f="#00ffff">3x25</Txt>
      <Txt x={1784} y={581} s={7} b f="#00ffff">KABLO</Txt>
      <Txt x={1838} y={540} s={7} b f="#00ffff">K.A.K.R</Txt><Txt x={1839} y={548} s={7} b f="#00ffff">4x25A</Txt><Txt x={1838} y={556} s={7} b f="#00ffff">(30mA)</Txt>
      <Txt x={1872} y={540} s={7} b f="#00ffff">DİJİTAL</Txt><Txt x={1872} y={548} s={7} b f="#00ffff">SAYAÇ</Txt><Txt x={1872} y={556} s={7} b f="#00ffff">3x10A</Txt>
    </g>
  );
}

function Drawing() {
  return (
    <svg className="absolute inset-0 size-full" role="img" aria-label="Electrical project drawing">
      <defs>
        <pattern id="weave" width="8" height="8" patternUnits="userSpaceOnUse">
          <path d="M0 4l4-4M0 8l4-4M4 8l4-4M1 1l3 3M4 0l4 4M4 4l4 4M0 4l4 4" stroke="#b5b5b5" strokeWidth="1" />
        </pattern>
      </defs>
      <g transform="translate(-6 -179)" fill="none">
        <Grid />
        <g shapeRendering="crispEdges">
          <path d="M333 179V950M6 990H4000" strokeWidth="2" stroke="#a85658" />
          <path d="M1158.500 179V950M6 950.500H4000" stroke="#d46a68" />
        </g>
        <FloorPlan />
        <RiserDiagrams />
        <Txt x={-1} y={981} s={30} b serif f="#00ffff">MAL KAT PLAN</Txt>
        <Txt x={261} y={981} s={30} b serif f="#00ffff">ÖLÇEK = 1/50</Txt>
        <Txt x={864} y={981} s={30} b serif f="#00ffff">YÜKLEME CETVELİ</Txt>
        <Txt x={1588} y={981} s={30} b serif f="#00ffff">KOLON ŞEMASI</Txt>
        <path d="M28 911l6 7 7-7M34.500 918v7M26.500 928v45M22.500 973.500h9v9h-9zM32 978.500h45M81 964l13 13M94 964l-13 13" stroke="#f0f0f0" />
        <path d="M638.500 841V878M638.500 883V928M590 880.500H636M641 880.500H687M636.500 878.500h4v4h-4z" stroke="#f0f0f0" shapeRendering="crispEdges" />
      </g>
    </svg>
  );
}

/* ---------- load schedule ---------- */

const rows = `P1|3x20||1||||5000|5000|ELK KOMBİ
P2|16||1|2500||||2500|ÇAMAŞIR MAKİNASI
P3|16||3||900|||900|PRİZ
P4|16||1|||2500||2500|KLİMA
P5|16||4|1200||||1200|PRİZ
P6|16||1||2500|||2500|BULAŞIK MAKİNASI
P7|16||3|||900||900|PRİZ
P8|16||1||2000|||2000|FIRIN
P9|16||4|1200||||1200|PRİZ
P10|16||6|||1800||1800|PRİZ
P11|16||1|300||||300|TV SİST.
P12|16||1||300|||300|KAMERA SİST.
P13|16||1|||300||300|DİAFON SİT.
A1|10|6|||140|||140|AYDINLATMA
A2|10|7||220||||220|AYDINLATMA
A3|10|7||||160||160|AYDINLATMA
A4|10|9||200||||200|AYDINLATMA`.split("\n").map((r) => r.split("|"));

const cols = [19, 19, 20, 19, 19, 46, 50, 42, 42, 52, 43, 43, 44, 47, 64, 51, 52, 51, 50];

const K = "border-b border-r border-black p-0 ";
const G = "border-b border-r border-[#dedede] p-0 ";
const GL = "border-b border-r border-b-[#dedede] border-r-black p-0 ";

function Vert({ children, head }: Kids & { head?: boolean }) {
  return <span className={"inline-block rotate-180 whitespace-nowrap [writing-mode:vertical-rl] " + (head ? "text-[13px] leading-[13px]" : "text-[12px] leading-[17px]")}>{children}</span>;
}

function Blank({ n, last }: { n: number; last?: boolean }) {
  return <>{Array.from({ length: n }, (_, i) => <td key={i} className={last && i === n - 1 ? GL : G} />)}</>;
}

function LoadTable() {
  return (
    <div className="absolute left-[360px] top-[98px] border border-[#f01818] bg-white font-['Liberation_Sans',Arial,sans-serif] text-[10px] text-black">
      <table className="w-[773px] table-fixed border-separate border-spacing-0 text-center leading-[14px]">
        <colgroup>{cols.map((w, i) => <col key={i} style={{ width: w }} />)}</colgroup>
        <thead className="text-[13px]">
          <tr className="h-[30px] bg-[#d8d8d8]"><th colSpan={19} className="border-b border-black p-0">DVT (DUBLEKS VİLLA TABLOSU)</th></tr>
          <tr className="h-5">
            <td colSpan={5} className={K} />
            <th rowSpan={2} className={K + "bg-[#eeece1]"}>LİNYE<br />NO</th>
            <th colSpan={2} className={K + "bg-[#d8d8d8]"}>SİGORTA</th>
            <th colSpan={2} className={K + "whitespace-nowrap bg-[#d8d8d8]"}>SORTİ ADEDİ</th>
            <th colSpan={5} className={K + "bg-[#d8d8d8]"}>GÜCÜ (W)</th>
            <th rowSpan={2} colSpan={4} className={K + "bg-[#eeece1]"}>AÇIKLAMALAR</th>
          </tr>
          <tr className="h-[97px]">
            {["KURULU GÜÇ", "T.FAKTORU", "TALEP GÜCÜ", "SIGORTA", "K.A.K.Ş."].map((t, i) => (
              <th key={t} className={"border-b border-r border-b-black bg-[#ffffcc] p-0 pb-[2px] text-left align-bottom " + (i === 4 ? "border-r-black" : "border-r-[#bdbdbd]")}><Vert head>{t}</Vert></th>
            ))}
            {["CİNSİ", "AKIM", "AYD.", "PRİZ", "R", "S", "T", "RST", "TOPLAM"].map((t) => <th key={t} className={K + "bg-[#eeece1]"}>{t}</th>)}
          </tr>
        </thead>
        <tbody>
          {rows.map((r, ri) => (
            <tr key={r[0]} className="h-4">
              {ri === 0 && ["22.120", "", "10.448", "3x25A AOS 6kA", "30mA 4x25A"].map((t, i) => (
                <th key={i} rowSpan={18} className={K + "align-middle"}><Vert>{t}</Vert></th>
              ))}
              <th className={K}>{r[0]}</th>
              <td className={K}>AOS</td>
              {r.slice(1, 9).map((c, i) => <td key={i} className={K}>{c}</td>)}
              <td colSpan={4} className={K}>{r[9]}</td>
            </tr>
          ))}
          <tr className="h-8">
            <th colSpan={3} className={K}>TOPLAM</th>
            {["29", "28", "5620", "5840", "5660", "5000", "22120"].map((t, i) => <td key={i} className={K}>{t}</td>)}
            <td colSpan={4} className={K} />
          </tr>
          <tr className="h-4"><Blank n={10} last /><th rowSpan={2} colSpan={5} className={K}>TALEP GÜCÜ HESAPLAMA</th><Blank n={4} /></tr>
          <tr className="h-4"><Blank n={10} last /><Blank n={4} /></tr>
          <tr className="h-4"><Blank n={10} last /><td colSpan={3} className={GL}>TOPLAM KURULU GÜÇ :</td><td colSpan={2} className={GL}>22120</td><Blank n={4} /></tr>
          <tr className="h-4"><Blank n={10} last /><td className={G + "pr-[2px] text-right"}>8000</td><td className={G + "pl-[2px] text-left"}>%60</td><td className={GL + "pl-[2px] text-left"}>=</td><td colSpan={2} className={GL}>4800</td><Blank n={4} /></tr>
          <tr className="h-4"><Blank n={10} last /><td className={G + "pr-[2px] text-right"}>14120</td><td className={G + "pl-[2px] text-left"}>%40</td><td className={GL + "pl-[2px] text-left"}>=</td><td colSpan={2} className={GL}>5648</td><Blank n={4} /></tr>
          <tr className="h-4"><Blank n={10} last /><td colSpan={3} className={K}>TOPLAM TALEP GÜCÜ :</td><td colSpan={2} className={K}>10448</td><Blank n={4} /></tr>
          <tr className="h-4"><Blank n={19} /></tr>
        </tbody>
      </table>
    </div>
  );
}

/* ---------- canvas overlays ---------- */

function ViewCube() {
  return (
    <div className="absolute right-[17px] top-[37px] grid w-[132px] grid-cols-[22px_1fr_22px] font-['Liberation_Sans',sans-serif] text-[22px] font-bold text-[#b9bbbe]">
      <svg width="122" height="122" viewBox="0 0 122 122" className="absolute left-[5px] top-2" aria-hidden="true">
        <circle cx="61" cy="61" r="54" fill="none" stroke="#9aa0ac" strokeOpacity=".35" strokeWidth="12" />
      </svg>
      <span className="relative col-span-3 text-center leading-[28px]">N</span>
      <span className="relative self-center">W</span>
      <button className="relative mx-auto my-[15px] grid size-[52px] place-items-center border border-[#d0d0d0] bg-[#b6b8ba]">
        <span className="grid size-8 place-items-center bg-[#a1a9b0] font-['Open_Sans',sans-serif] text-[12px] text-[#4a505c]">TOP</span>
      </button>
      <span className="relative self-center text-right">E</span>
      <span className="relative col-span-3 text-center leading-[28px]">S</span>
      <button className="relative col-span-3 mx-auto mt-[17px] flex h-[17px] w-12 items-center justify-between rounded-[4px] border border-[#b8b8c8] bg-[#9c9fb0]/85 px-1 font-['Open_Sans',sans-serif] text-[11px] font-normal text-[#3c4150]">
        WCS<Ico w={8} h={5}><path d="M0 0h8L4 5z" stroke="#ddd" /></Ico>
      </button>
    </div>
  );
}

function NavBar() {
  const k = "#50555a";
  return (
    <div className="absolute right-1 top-[236px] flex h-[212px] w-8 flex-col items-center rounded-[4px] bg-[#a0a0a0]/55 pt-1">
      <button aria-label="Close navigation bar" className="mr-1 self-end"><Ico w={8} h={8}><circle cx="4" cy="4" r="3.500" stroke={k} /><path d="M2.500 2.500l3 3M5.500 2.500l-3 3" stroke={k} /></Ico></button>
      <button aria-label="Wheel" className="mt-[11px]"><Ico w={22} h={22}><path d="M21 11V1H11a10 10 0 1010 10z" stroke={k} /><circle cx="11" cy="11" r="6" stroke={k} /><circle cx="11" cy="11" r="3" stroke={k} /></Ico></button>
      <button aria-label="Pan" className="mt-5"><Ico w={24} h={24}><path d="M7 23L2 13c1-1 2-1 5 2L5 5c2-1 2 0 4 8V2c2-1 2 0 3 10l2-10c2 0 2 1 1 11l4-8c2 0 1 3-1 11l-2 7z" stroke={k} /></Ico></button>
      <button aria-label="Zoom extents" className="mt-[7px]"><Ico w={24} h={22}><path d="M2 2l14 14M16 2L2 16M2 6V2h4M12 2h4v4" stroke={k} strokeWidth="1.500" /><circle cx="16" cy="14" r="5" stroke={k} /><path d="M20 18l3 3" stroke={k} strokeWidth="2" /></Ico></button>
      <button aria-label="Orbit" className="mt-[18px]"><Ico w={20} h={22}><ellipse cx="10" cy="11" rx="9" ry="5" stroke={k} /><path d="M7 20V4l3-3 3 3v16z" stroke={k} /></Ico></button>
      <button aria-label="Show motion" className="mt-[14px]"><Ico w={24} h={24}><path d="M.5.500h5v6h-5zM8.500.500h5v6h-5zM16.500.500h5v6h-5zM.5 10.500h16v13H.5zM6 13l6 4-6 4z" stroke={k} fill="none" /></Ico></button>
    </div>
  );
}

function CommandLine() {
  return (
    <div className="absolute bottom-0 left-[382px] right-[383px] flex h-[26px] items-center bg-[#2c333f]">
      <span className="ml-[3px]"><Ico w={6} h={18}><path d="M1.500 0v18M4.500 0v18" strokeDasharray="2 1" strokeWidth="2" /></Ico></span>
      <button aria-label="Close" className="ml-[6px]"><Ico w={9} h={9}><path d="M0 0l9 9M9 0L0 9" strokeWidth="2" /></Ico></button>
      <button aria-label="Customize" className="ml-[10px]"><Ico><path d="M2 15l7-8" strokeWidth="3" /><path d="M9 1a5 5 0 00-1 7 5 5 0 007-2l-4 1-2-2 2-4z" fill="#dcdcdc" stroke="none" /></Ico></button>
      <div className="ml-[6px] flex h-full flex-1 items-center rounded-xs border-y border-[#d0d0d0] bg-white pl-1">
        <Ico w={16} h={13}><path d="M0 0h16v13H0z" fill="#6b6b6b" stroke="none" /><path d="M1 3h14v9H1z" fill="#fff" stroke="none" /><path d="M3 5l2 2-2 2M7 10h4" stroke="#555" /></Ico>
        <span className="ml-[2px]"><Ico w={8} h={4}><path d="M0 0h8L4 4z" fill="#555" stroke="none" /></Ico></span>
        <span className="ml-[3px] h-4 w-px bg-black" />
        <input aria-label="Command" className="h-full min-w-0 flex-1 px-1 text-[12px] text-black outline-none" />
        <span className="mr-[3px]"><Ico w={8} h={4}><path d="M0 4h8L4 0z" fill="#555" stroke="none" /></Ico></span>
      </div>
    </div>
  );
}

function Canvas() {
  return (
    <main className="relative mx-[3px] min-h-0 flex-1 overflow-hidden border-b border-[#3f4654] bg-[#212830]">
      <Drawing />
      <LoadTable />
      <button className="absolute left-[3px] top-[6px] text-[11px] text-[#f0f0f0]">[−][Top][2D Wireframe]</button>
      <div className="absolute right-3 top-[10px] flex items-center gap-[10px]">
        <button aria-label="Minimize view"><Ico w={10} h={10}><path d="M0 7.500h10" strokeWidth="3" stroke="#eee" /></Ico></button>
        <button aria-label="Restore view"><Ico w={10} h={10}><path d="M1 3h6v6H1z" strokeWidth="2" stroke="#eee" /><path d="M3 .5h6.500V8" stroke="#eee" /></Ico></button>
        <button aria-label="Close view"><Ico w={9} h={9}><path d="M1 1l7 7M8 1L1 8" strokeWidth="2" stroke="#eee" /></Ico></button>
      </div>
      <ViewCube />
      <NavBar />
      <CommandLine />
    </main>
  );
}

/* ---------- status bar ---------- */

function Sb({ on, w = "w-6", label, children }: Kids & { on?: boolean; w?: string; label: string }) {
  return <button aria-label={label} className={"grid h-6 place-items-center " + w + (on ? " bg-[#5f8ec4]" : "")}>{children}</button>;
}
function Grp({ children }: Kids) {
  return <div className="flex h-6 items-center bg-[#3b4453]">{children}</div>;
}
const person = "M8 0q1 8 7 15l-5-3v3H6v-3l-5 3Q7 8 8 0z";

function StatusBar() {
  return (
    <footer className="flex h-8 items-start justify-between pr-[5px] text-[#e6e6e6]">
      <nav className="flex items-start gap-[2px] pl-[15px] text-[#b9bcc2]">
        <a href="#model" className="h-[18px] w-14 rounded-b-md bg-[#3b4453] text-center font-bold leading-[18px] text-white">Model</a>
        <a href="#layout1" className="ml-px h-[18px] w-[63px] rounded-b-md bg-[#2c333f] text-center leading-[18px]">Layout1</a>
        <a href="#layout2" className="h-[18px] w-[63px] rounded-b-md bg-[#2c333f] text-center leading-[18px]">Layout2</a>
        <button aria-label="New layout" className="ml-[2px] grid h-4 w-[22px] place-items-center rounded-b-md bg-[#2c333f]"><Ico w={9} h={9}><path d="M4.500 0v9M0 4.500h9" stroke="#bbb" /></Ico></button>
      </nav>
      <div className="flex gap-[3px] pt-[2px]">
        <Grp><button className="h-6 w-[47px] text-center text-[12px]">MODEL</button></Grp>
        <Grp>
          <Sb on label="Grid"><Ico><path d="M3.500 0v16M8 0v16M12.500 0v16M0 3.500h16M0 8h16M0 12.500h16" /></Ico></Sb>
          <Sb label="Snap"><Ico s={14}><path d="M1 1.500h14M1 6.500h14M1 11.500h14" strokeWidth="2" strokeDasharray="2 3" /></Ico></Sb>
          <Sb w="w-4" label="Snap options"><Caret /></Sb>
        </Grp>
        <Grp>
          <Sb label="Ortho"><Ico><path d="M1.500 0v14.500H16M1 9.500h5.500V15" /></Ico></Sb>
          <Sb on label="Polar"><Ico><circle cx="7" cy="9" r="6" /><path d="M7 9h9M7 9l7-8" /></Ico></Sb>
          <Sb w="w-4" label="Polar options"><Caret /></Sb>
          <Sb label="Isodraft"><Ico s={15}><path d="M7.500 0v15" stroke="#4fc37d" /><path d="M1 2l12 12" stroke="#e05a5a" /></Ico></Sb>
          <Sb w="w-4" label="Isodraft options"><Caret /></Sb>
        </Grp>
        <Grp>
          <Sb on label="Object tracking"><Ico><path d="M15 1L2 14.500h14M9 8v4" /></Ico></Sb>
          <Sb on label="Object snap"><Ico><path d="M3 3.500h11.500v12H2.500V6M.5.5h4v4h-4z" /></Ico></Sb>
          <Sb w="w-[14px]" label="Object snap options"><Caret /></Sb>
        </Grp>
        <Grp>
          <Sb on label="Annotation visibility"><Ico><path d={person} fill="#fff" stroke="none" /><circle cx="13" cy="3" r="2" /></Ico></Sb>
          <Sb label="Auto scale"><Ico><path d={person} fill="#dcdcdc" stroke="none" /><path d="M14 0l-3 4h3l-2 4" /></Ico></Sb>
          <Sb label="Annotation scale"><Ico><path d={person} fill="#dcdcdc" stroke="none" /></Ico></Sb>
          <button className="flex w-[34px] items-center justify-center gap-1">1:1<Caret /></button>
        </Grp>
        <Grp>
          <Sb label="Workspace"><Ico><circle cx="8" cy="8" r="4" strokeWidth="3" /><path d="M8 0v3M8 13v3M0 8h3M13 8h3M2.500 2.500l2 2M11.500 11.500l2 2M13.500 2.500l-2 2M4.500 11.500l-2 2" strokeWidth="3" /></Ico></Sb>
          <Sb w="w-[14px]" label="Workspace options"><Caret /></Sb>
        </Grp>
        <Grp><Sb label="Annotation monitor"><Ico><path d="M8 0v16M0 8h16" strokeWidth="2" /></Ico></Sb></Grp>
        <Grp><Sb label="Isolate objects"><Ico><path d="M1.500 1.500h5v6h-5zM4 15l3-5 3 5z" /><circle cx="12" cy="6" r="3" /></Ico></Sb></Grp>
        <Grp><Sb w="w-[22px]" label="Hardware acceleration"><Ico><g stroke="none"><path d="M2 0h9l4 5v6l-5 2-8-4z" fill="#2f7fc4" /><path d="M0 9h6v6H0z" fill="#f2b42c" /></g><path d="M0 3h8M3 0v6" stroke="#fff" /><path d="M7 11l3 3 6-6" stroke="#3fae3f" strokeWidth="3" /></Ico></Sb></Grp>
        <Grp>
          <Sb label="Clean screen"><Ico><path d="M.5 2.500h15v11H.5zM3 11l3-3M3 9v2h2M13 5l-3 3M13 7V5h-2" /></Ico></Sb>
          <Sb label="Customization"><Ico><path d="M0 2h16M0 8h16M0 14h16" strokeWidth="2" /></Ico></Sb>
        </Grp>
      </div>
    </footer>
  );
}

/* ---------- taskbar ---------- */

const apps: [string, React.ReactNode, number?][] = [
  ["Start", <g key="0" stroke="none"><path d="M0 1h11v10H0zM12 1h11v10H12z" fill="#6ad4fb" /><path d="M0 12h11v11H0zM12 12h11v11H12z" fill="#1fa8f5" /></g>],
  ["Search", <g key="1"><circle cx="14" cy="10" r="8" fill="#5b4a5c" stroke="#eee" strokeWidth="2" /><path d="M8 16l-5 6" stroke="#eee" strokeWidth="3" /></g>],
  ["Task view", <g key="2" stroke="none"><path d="M7 1h17v16H7z" fill="#f2f2f2" /><path d="M0 7h17v16H0z" fill="#777" fillOpacity=".85" /></g>],
  ["Chat", <g key="3" stroke="none"><path d="M12 0a12 12 0 110 24H1l1-5A12 12 0 0112 0z" fill="#6264c7" /><path d="M5 8h9v9H5zM15 11l4-3v9l-4-3z" fill="#fff" /></g>],
  ["File Explorer", <g key="4" stroke="none"><path d="M0 2h9l2 3h13v17H0z" fill="#fbcf4b" /><path d="M0 2h9l1 3H0z" fill="#e0980c" /><path d="M5 15h14v8H5z" fill="#1c78c4" /></g>, 1],
  ["WhatsApp", null, 1],
  ["Visual Studio", <g key="6" stroke="none"><path d="M17 0l6 3v18l-6 3L7 14l-4 4-3-2 4-4-4-4 3-2 4 4zM17 7l-5 5 5 5z" fill="#a77ee6" /><path d="M17 0l6 3v18l-6 3z" fill="#c9a2f5" /></g>],
  ["Razer", <g key="7"><path d="M2 5l16-1 3 8-6 8-9-5z" fill="#222" stroke="#999" /><path d="M7 10l8-2 2 4-3 5-6-4z" fill="#22e01c" stroke="none" /></g>],
  ["Office", <g key="8" stroke="none"><path d="M4 4L14 0l8 3v18l-7 3L4 20l9 1V5L8 7v9l-4 2z" fill="#ea3e12" /><path d="M4 4l10-4v5L8 7v9l-4 2z" fill="#b5201b" /></g>],
  ["Microsoft Store", <g key="9" stroke="none"><path d="M6 1h12v6h-2V3H8v4H6z" fill="#38b6f0" /><rect x="0" y="6" width="24" height="18" rx="3" fill="#f4f4f4" /><path d="M7 10h4v4H7z" fill="#f25022" /><path d="M12 10h4v4h-4z" fill="#7fba00" /><path d="M7 15h4v4H7z" fill="#00a4ef" /><path d="M12 15h4v4h-4z" fill="#ffb900" /></g>],
  ["Visual Studio Code", null],
  ["Spotify", null],
  ["Edge", <g key="e" stroke="none"><circle cx="12" cy="12" r="12" fill="#1b83d6" /><path d="M12 0a12 12 0 0112 11c0 4-3 6-7 6-3 0-4-1-4-3 1-1 2-2 1-4-1-3-5-4-9-2-3 1-4 3-5 4A12 12 0 0112 0z" fill="#3bc9c0" /><path d="M16 1a12 12 0 018 10c0 4-3 6-7 6 3-5 4-11-1-16z" fill="#5edc73" /><path d="M7 13c0 6 5 9 11 8a12 12 0 01-9 2C4 21 3 13 9 9c-1 1-2 2-2 4z" fill="#114a8b" /></g>],
  ["Chrome", <g key="c" stroke="none"><circle cx="11" cy="13" r="11" fill="#34a853" /><path d="M11 13L1 8a11 11 0 0120 0z" fill="#ea4335" /><path d="M11 13h11a11 11 0 01-11 11z" fill="#fbbc05" /><circle cx="11" cy="13" r="5" fill="#4285f4" stroke="#fff" strokeWidth="1.500" /></g>, 1],
  ["Phone", <g key="p" stroke="none"><path d="M1 2h13v15H1zM6 8h17v11H6z" fill="#1b7fd6" /><path d="M3 4h10v10H3z" fill="#35a7f5" /><path d="M0 17h8v5H0zM10 19h8v3h-8z" fill="#1567b4" /></g>, 1],
  ["WinRAR", <g key="r" stroke="none"><path d="M0 0h24v8H0z" fill="#b02d4a" /><path d="M0 8h24v8H0z" fill="#3c66b8" /><path d="M0 16h24v7H0z" fill="#2f8f4a" /><path d="M8 0h8v24H8z" fill="#d98a1f" /><path d="M10 7h5v8h-5z" fill="#f2e6c8" /><path d="M2 0h2v23H2zM20 0h2v23h-2z" fill="#e0b33a" fillOpacity=".6" /></g>, 1],
  ["AutoCAD", <g key="z" stroke="none"><path d="M0 0h24v24H0z" fill="#f7ebe8" /><path d="M10 3h4l7 18h-4l-2-5H9l-2 5H3zM12 8l-2 5h4z" fill="#b3202a" /></g>, 2],
];

function Taskbar() {
  return (
    <div className="grid h-12 grid-cols-[1fr_auto_1fr] items-center bg-[linear-gradient(90deg,#231b33_0%,#241b33_28%,#2b183c_33%,#371a2e_40%,#36201f_50%,#34201c_62%,#47161a_74%,#3e1613_86%,#2c1a1c_100%)] text-white">
      <button className="flex items-center gap-[9px] pl-[30px] text-left text-[11px] leading-4">
        <Ico s={20}><path d="M12 0c6 3 9 10 6 15-3 6-13 7-18-1 9 1 14-5 12-14z" fill="#fcc21b" stroke="none" /></Ico>
        <span>15°C<br /><span className="text-[#c8c4cc]">Açık</span></span>
      </button>
      <div className="flex">
        {apps.map(([n, i, st]) => (
          <button key={n} aria-label={n} className="relative grid h-12 w-11 place-items-center">
            <span className={"grid size-10 place-items-center " + (st === 2 ? "rounded border border-white/10 bg-white/10" : "")}>
              {n === "WhatsApp" ? <span className="grid size-6 place-items-center rounded-full border border-white bg-[#25d366]"><FaWhatsapp size={20} /></span>
                : n === "Visual Studio Code" ? <VscVscode size={24} color="#2ba2ef" />
                : n === "Spotify" ? <FaSpotify size={24} color="#1ed760" />
                : <Ico s={24}>{i}</Ico>}
            </span>
            {n === "Chrome" && (
              <span className="absolute right-[5px] top-[6px]">
                <Ico w={16} h={16}><circle cx="8" cy="8" r="8" fill="#8fb3c8" stroke="none" /><path d="M4 6a4 4 0 018 0l1 8a8 8 0 01-10 0z" fill="#2a1d22" stroke="none" /><circle cx="8" cy="7" r="2.500" fill="#e0b09a" stroke="none" /></Ico>
              </span>
            )}
            {n === "Phone" && <span className="absolute right-[2px] top-[6px] grid h-4 w-5 place-items-center rounded-full bg-[#e2a0e4] text-[11px] leading-4 text-black">29</span>}
            {st === 1 && <span className="absolute bottom-[5px] h-[3px] w-[6px] rounded-full bg-[#a29a9e]" />}
            {st === 2 && <span className="absolute bottom-[5px] h-[3px] w-4 rounded-full bg-[#e2a0e4]" />}
          </button>
        ))}
      </div>
      <div className="flex items-center justify-end pr-[18px] text-[11px]">
        <button aria-label="Hidden icons"><Ico w={12} h={8}><path d="M1 7l5-6 5 6" stroke="#fff" strokeWidth="1.500" /></Ico></button>
        <button aria-label="OneDrive" className="ml-[10px]"><Ico><path d="M3 13a4 4 0 010-7 5 5 0 019-1 4 4 0 013 7z" fill="#bbb" stroke="none" /><circle cx="11" cy="11" r="5" fill="#d8232a" stroke="none" /><path d="M9 9l4 4M13 9l-4 4" stroke="#fff" /></Ico></button>
        <span className="ml-4">TUR</span>
        <button aria-label="Network, sound and battery" className="ml-[18px] flex items-center gap-2">
          <Ico><path d="M1 6a10 10 0 0114 0M3 9a7 7 0 0110 0M5.500 11.500a4 4 0 015 0" stroke="#fff" strokeWidth="1.500" /><circle cx="8" cy="14" r="1.500" fill="#fff" stroke="none" /></Ico>
          <Ico><path d="M1 6h3l4-4v12l-4-4H1zM10 5a4 4 0 010 6M12 3a7 7 0 010 10M14 1.500a9 9 0 010 13" stroke="#fff" /></Ico>
          <Ico><path d="M4 4.500h10v8H4zM15 7v3" stroke="#fff" strokeWidth="1.500" /><path d="M6 7h6v4H6z" fill="#fff" stroke="none" /><path d="M0 3h5v3H0zM1 1v3M4 1v3M2.500 6v4" stroke="#fff" /></Ico>
        </button>
        <div className="ml-4 w-[50px] whitespace-nowrap text-right leading-4">05:33<br />9.06.2022</div>
        <span className="ml-[6px] grid size-5 place-items-center rounded-full bg-[#e2a0e4] text-[11px] leading-5 text-black">20</span>
      </div>
    </div>
  );
}

export default function App() {
  return (
    <div className="flex h-screen min-h-[600px] flex-col overflow-hidden bg-[#030018] font-['Open_Sans',sans-serif] text-[11px]">
      <div className="mx-[2px] mt-[2px] flex min-h-0 flex-1 flex-col border border-[#0b8ad2] bg-[#222933]">
        <Header />
        <Ribbon />
        <DocTabs />
        <Canvas />
        <StatusBar />
      </div>
      <Taskbar />
    </div>
  );
}
